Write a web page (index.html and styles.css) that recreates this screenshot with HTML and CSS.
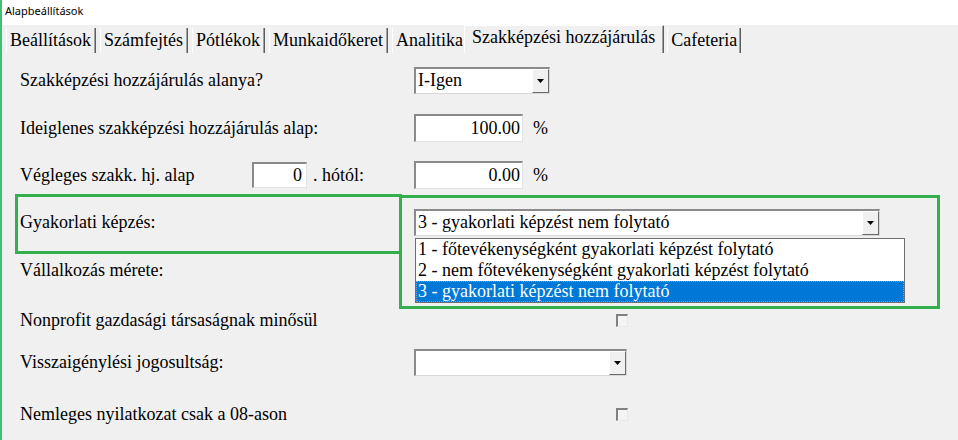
FILE: index.html
```html
<!DOCTYPE html>
<html lang="hu">
<head>
<meta charset="utf-8">
<title>Alapbeállítások</title>
<link rel="stylesheet" href="styles.css">
</head>
<body>
<div class="window">
  <div class="titlebar">Alapbeállítások</div>
  <div class="tabs">
    <div class="tab first">Beállítások</div>
    <div class="tab">Számfejtés</div>
    <div class="tab">Pótlékok</div>
    <div class="tab">Munkaidőkeret</div>
    <div class="tab before-active">Analitika</div>
    <div class="tab active">Szakképzési hozzájárulás</div>
    <div class="tab last">Cafeteria</div>
  </div>
  <div class="panel">
    <div class="form">
      <div class="label">Szakképzési hozzájárulás alanya?</div>
      <div class="ctrl">
        <div class="combo combo-alanya">
          <span class="combo-text">I-Igen</span>
          <span class="combo-btn"><svg width="7" height="4" viewBox="0 0 7 4"><path d="M0 0H7L3.5 4Z" fill="#000"/></svg></span>
        </div>
      </div>

      <div class="label">Ideiglenes szakképzési hozzájárulás alap:</div>
      <div class="ctrl">
        <div class="field field-num">100.00</div><span class="unit">%</span>
      </div>

      <div class="label label-split">
        <span class="label-fixed">Végleges szakk. hj. alap</span>
        <div class="field field-small">0</div>
        <span class="suffix">. hótól:</span>
      </div>
      <div class="ctrl">
        <div class="field field-num">0.00</div><span class="unit">%</span>
      </div>

      <div class="label">Gyakorlati képzés:</div>
      <div class="ctrl">
        <div class="combo combo-gyak">
          <span class="combo-text">3 - gyakorlati képzést nem folytató</span>
          <span class="combo-btn"><svg width="7" height="4" viewBox="0 0 7 4"><path d="M0 0H7L3.5 4Z" fill="#000"/></svg></span>
          <ul class="dropdown">
            <li>1 - főtevékenységként gyakorlati képzést folytató</li>
            <li>2 - nem főtevékenységként gyakorlati képzést folytató</li>
            <li class="selected">3 - gyakorlati képzést nem folytató</li>
          </ul>
        </div>
      </div>

      <div class="label">Vállalkozás mérete:</div>
      <div class="ctrl"></div>

      <div class="label">Nonprofit gazdasági társaságnak minősül</div>
      <div class="ctrl"><span class="checkbox"></span></div>

      <div class="label">Visszaigénylési jogosultság:</div>
      <div class="ctrl">
        <div class="combo combo-vissza">
          <span class="combo-text"></span>
          <span class="combo-btn"><svg width="7" height="4" viewBox="0 0 7 4"><path d="M0 0H7L3.5 4Z" fill="#000"/></svg></span>
        </div>
      </div>

      <div class="label">Nemleges nyilatkozat csak a 08-ason</div>
      <div class="ctrl"><span class="checkbox"></span></div>
    </div>
    <div class="highlight hl-left"></div>
    <div class="highlight hl-right"></div>
  </div>
</div>
</body>
</html>
```

FILE: styles.css
```css
* { box-sizing: border-box; }

html, body {
  margin: 0;
  padding: 0;
  background: #f0f0f0;
}

.window {
  width: 958px;
  height: 440px;
  overflow: hidden;
  border-left: 2px solid #3fbf73;
  background: #f0f0f0;
  font-family: "Liberation Serif", "Times New Roman", serif;
  font-size: 18px;
  color: #000;
}

.titlebar {
  height: 25px;
  background: #ffffff;
  font-family: "Noto Sans", "Open Sans", sans-serif;
  font-size: 11px;
  line-height: 22px;
  padding-left: 3px;
  color: #000;
}

.tabs {
  height: 32px;
  display: flex;
  align-items: flex-end;
  padding-left: 4px;
  padding-bottom: 4px;
  background: #f0f0f0;
}

.tab {
  height: 25px;
  line-height: 24px;
  padding: 0 4px 0 3px;
  border-left: 1px solid #ffffff;
  border-right: 1px solid #5f5f5f;
  box-shadow: inset -1px 0 0 #a0a0a0;
  margin-right: 4px;
  white-space: nowrap;
}

.tab.before-active {
  border-right-color: transparent;
  box-shadow: none;
  margin-right: 0;
  padding-right: 0;
}

.tab.active {
  height: 28px;
  line-height: 22px;
  padding: 0 8px 6px 7px;
  margin-right: 3px;
  border-left: 1px solid #ffffff;
  border-top: 1px solid #ffffff;
}

.tab.last {
  padding-right: 3px;
}

.panel {
  position: relative;
  height: 383px;
}

.form {
  display: grid;
  grid-template-columns: 394px 1fr;
  grid-template-rows: 47px 48px 46px 48px 48px 52px 32px 72px;
  padding-left: 18px;
}

.label {
  display: flex;
  align-items: center;
  white-space: nowrap;
}

.label-fixed {
  width: 232px;
}

.suffix {
  margin-left: 6px;
}

.ctrl {
  display: flex;
  align-items: center;
}

.field {
  height: 28px;
  background: #fff;
  border-top: 2px solid #8a8a8a;
  border-left: 2px solid #8a8a8a;
  border-right: 1px solid #e3e3e3;
  border-bottom: 1px solid #e3e3e3;
  text-align: right;
  line-height: 24px;
  padding-right: 2px;
}

.field-num {
  width: 109px;
}

.field-small {
  width: 55px;
  height: 26px;
  line-height: 23px;
  padding-right: 4px;
}

.unit {
  margin-left: 10px;
}

.combo {
  position: relative;
  height: 27px;
  background: #fff;
  border-top: 2px solid #8a8a8a;
  border-left: 2px solid #8a8a8a;
  border-right: 1px solid #d8d8d8;
  border-bottom: 1px solid #d8d8d8;
  display: flex;
  align-items: stretch;
}

.combo-alanya { width: 136px; }
.combo-gyak { width: 466px; }
.combo-vissza { width: 213px; }

.combo-text {
  flex: 1;
  line-height: 23px;
  padding-left: 2px;
  white-space: nowrap;
  overflow: visible;
}

.combo-btn {
  width: 17px;
  background: #f0f0f0;
  border-left: 1px solid #ffffff;
  border-top: 1px solid #ffffff;
  border-right: 1px solid #6b6b6b;
  border-bottom: 1px solid #6b6b6b;
  display: flex;
  align-items: center;
  justify-content: center;
}

.dropdown {
  position: absolute;
  top: 27px;
  left: -1px;
  width: 490px;
  height: 65px;
  margin: 0;
  padding: 0;
  list-style: none;
  background: #fff;
  border: 1px solid #6e6e6e;
  z-index: 2;
}

.dropdown li {
  height: 21px;
  line-height: 20px;
  padding-left: 2px;
  white-space: nowrap;
}

.dropdown li.selected {
  background: #0078d7;
  color: #fff;
  outline: 1px dotted #7f9fc0;
  outline-offset: -1px;
}

.checkbox {
  display: block;
  width: 12px;
  height: 13px;
  margin-left: 202px;
  background: #f4f4f4;
  border-top: 2px solid #808080;
  border-left: 2px solid #808080;
  border-right: 1px solid #e8e8e8;
  border-bottom: 1px solid #e8e8e8;
}

.highlight {
  position: absolute;
  border: 3px solid #33b04d;
  pointer-events: none;
  z-index: 3;
}

.hl-left {
  left: 13px;
  top: 137px;
  width: 387px;
  height: 60px;
}

.hl-right {
  left: 397px;
  top: 138px;
  width: 541px;
  height: 114px;
}
```
